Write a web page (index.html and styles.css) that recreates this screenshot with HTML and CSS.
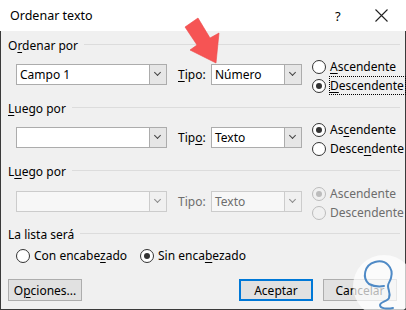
FILE: index.html
```html
<!DOCTYPE html>
<html lang="es">
<head>
    <meta charset="UTF-8">
    <title>Ordenar texto</title>
    <link rel="stylesheet" href="styles.css">
</head>
<body>

<div class="dialog">
    <div class="titlebar">
        <span class="title">Ordenar texto</span>
        <span class="help">?</span>
        <svg class="close" width="13" height="13" viewBox="0 0 13 13">
            <path d="M0.5 0.5 L12.5 12.5 M12.5 0.5 L0.5 12.5" stroke="#222" stroke-width="1.1" fill="none"/>
        </svg>
    </div>

    <div class="content">
        <!-- Ordenar por -->
        <div class="group-title first"><span>O<u>r</u>denar por</span></div>
        <div class="sort-row">
            <div class="combo field"><span>Campo 1</span><i class="drop"></i></div>
            <label class="tipo"><u>T</u>ipo:</label>
            <div class="combo kind"><span>Número</span><i class="drop"></i></div>
            <div class="radios">
                <div class="radio"><i class="dot"></i><span><u>A</u>scendente</span></div>
                <div class="radio checked"><i class="dot"></i><span class="focus"><u>D</u>escendente</span></div>
            </div>
        </div>

        <!-- Luego por -->
        <div class="group-title"><span><u>L</u>uego por</span></div>
        <div class="sort-row">
            <div class="combo field"><span></span><i class="drop"></i></div>
            <label class="tipo">Tip<u>o</u>:</label>
            <div class="combo kind"><span>Texto</span><i class="drop"></i></div>
            <div class="radios">
                <div class="radio checked"><i class="dot"></i><span>As<u>c</u>endente</span></div>
                <div class="radio"><i class="dot"></i><span>Desce<u>n</u>dente</span></div>
            </div>
        </div>

        <!-- Luego por (disabled) -->
        <div class="group-title third"><span>L<u>u</u>ego por</span></div>
        <div class="sort-row disabled">
            <div class="combo field"><span></span><i class="drop"></i></div>
            <label class="tipo">Tipo:</label>
            <div class="combo kind"><span>Texto</span><i class="drop"></i></div>
            <div class="radios">
                <div class="radio checked"><i class="dot"></i><span>Ascendente</span></div>
                <div class="radio"><i class="dot"></i><span>Descendente</span></div>
            </div>
        </div>

        <!-- La lista será -->
        <div class="group-title fourth"><span>La lista será</span></div>
        <div class="header-row">
            <div class="radio with-header"><i class="dot"></i><span>Con encabe<u>z</u>ado</span></div>
            <div class="radio checked"><i class="dot"></i><span>Sin enca<u>b</u>ezado</span></div>
        </div>

        <div class="buttons">
            <button class="btn">O<u>p</u>ciones...</button>
            <span class="spacer"></span>
            <button class="btn default">Aceptar</button>
            <button class="btn">Cancelar</button>
        </div>
    </div>

    <!-- red arrow pointing at the Tipo box -->
    <svg class="arrow" width="60" height="60" viewBox="0 0 60 60">
        <polygon points="10,12 23,3 35,23 44,18 41,48 15,35 22,30" fill="#f65454" stroke="#ec4848" stroke-width="0.6"/>
    </svg>

    <!-- watermark logo -->
    <svg class="logo" width="70" height="70" viewBox="0 0 70 70">
        <circle cx="38" cy="38" r="31" fill="#ffffff" fill-opacity="0.7"/>
        <path d="M23 36 C16 30 18 17 29 14 C40 11 48 20 45 30 C44 34 42 35 42 38 C42 42 45 45 43 50 C42 53 34 54 34 57 C34 61 42 61 47 60 M23 36 C27 38 32 39 38 38"
              stroke="#4f8ac6" stroke-width="2" fill="none" stroke-linecap="round" stroke-linejoin="round"/>
    </svg>
</div>

</body>
</html>
```
FILE: styles.css
```css
* {
    box-sizing: border-box;
}
body {
    margin: 0;
    font-family: "Noto Sans", "Open Sans", sans-serif;
    font-size: 12px;
    color: #000;
    background: #fff;
}
.dialog {
    position: relative;
    width: 406px;
    height: 310px;
    overflow: hidden;
    background: #f0f0f0;
}
.titlebar {
    display: flex;
    align-items: center;
    height: 31px;
    padding-left: 10px;
    background: #fff;
    font-size: 12.5px;
}
.title {
    flex: 1;
}
.help {
    width: 40px;
    font-size: 13px;
}
.close {
    margin-right: 18px;
}
.content {
    height: 279px;
    padding: 6px 5px 0 7px;
    border: 1px solid #3a3a3a;
    border-top: none;
}
u {
    text-decoration: underline;
    text-underline-offset: 2px;
}
.group-title {
    display: flex;
    align-items: center;
    height: 16px;
    margin-top: 0;
}
.group-title::after {
    content: "";
    flex: 1;
    height: 1px;
    margin-left: 6px;
    margin-top: -1px;
    background: #dcdcdc;
}
.group-title + .sort-row {
    margin-top: 4px;
}
.sort-row + .group-title {
    margin-top: 5px;
}
.group-title.third + .sort-row {
    margin-top: 5px;
}
.group-title.fourth {
    margin-top: 4px;
}
.sort-row {
    display: flex;
    align-items: flex-start;
    height: 38px;
    padding-left: 8px;
}
.sort-row > * {
    flex-shrink: 0;
}
.combo {
    display: flex;
    height: 21px;
    margin-top: 7px;
    background: #fff;
    border: 1px solid #acacac;
}
.combo span {
    flex: 1;
    padding-left: 3px;
    line-height: 19px;
    white-space: nowrap;
}
.drop {
    position: relative;
    width: 17px;
    background: #e6e6e6;
    border-left: 1px solid #acacac;
}
.drop::after {
    content: "";
    position: absolute;
    left: 5px;
    top: 5px;
    width: 4px;
    height: 4px;
    border-right: 1px solid #444;
    border-bottom: 1px solid #444;
    transform: rotate(45deg);
}
.field {
    width: 151px;
}
.kind {
    width: 91px;
}
.tipo {
    width: 33px;
    margin-left: 11px;
    margin-top: 7px;
    line-height: 21px;
}
.radios {
    margin-left: 10px;
}
.radio {
    display: flex;
    align-items: center;
    height: 19px;
    white-space: nowrap;
}
.dot {
    position: relative;
    flex-shrink: 0;
    width: 14px;
    height: 14px;
    margin-right: 4px;
    border: 1px solid #333;
    border-radius: 50%;
    background: #fff;
}
.radio.checked .dot::after {
    content: "";
    position: absolute;
    left: 3px;
    top: 3px;
    width: 6px;
    height: 6px;
    border-radius: 50%;
    background: #333;
}
.focus {
    outline: 1px dotted #000;
    outline-offset: 0;
    padding-right: 1px;
}
.sort-row.disabled .combo {
    background: #f7f7f7;
    border-color: #cccccc;
}
.sort-row.disabled .drop {
    background: #f0f0f0;
    border-left-color: #cccccc;
}
.sort-row.disabled .drop::after {
    border-color: #8a8a8a;
}
.sort-row.disabled .combo span,
.sort-row.disabled .tipo,
.sort-row.disabled .radio span {
    color: #6d6d6d;
}
.sort-row.disabled .dot {
    border-color: #bcbcbc;
    background: #f0f0f0;
}
.sort-row.disabled .radio.checked .dot::after {
    background: #bcbcbc;
}
.header-row {
    display: flex;
    height: 19px;
    margin-top: 4px;
    padding-left: 8px;
}
.header-row .with-header {
    width: 124px;
}
.buttons {
    display: flex;
    margin-top: 14px;
    margin-right: 3px;
}
.spacer {
    flex: 1;
}
.btn {
    width: 74px;
    height: 22px;
    padding: 0;
    font: inherit;
    color: #000;
    background: #e1e1e1;
    border: 1px solid #adadad;
}
.btn + .btn {
    margin-left: 10px;
}
.btn.default {
    border: 2px solid #0078d7;
}
.arrow {
    position: absolute;
    left: 175px;
    top: 15px;
}
.logo {
    position: absolute;
    left: 346px;
    top: 248px;
}
```
